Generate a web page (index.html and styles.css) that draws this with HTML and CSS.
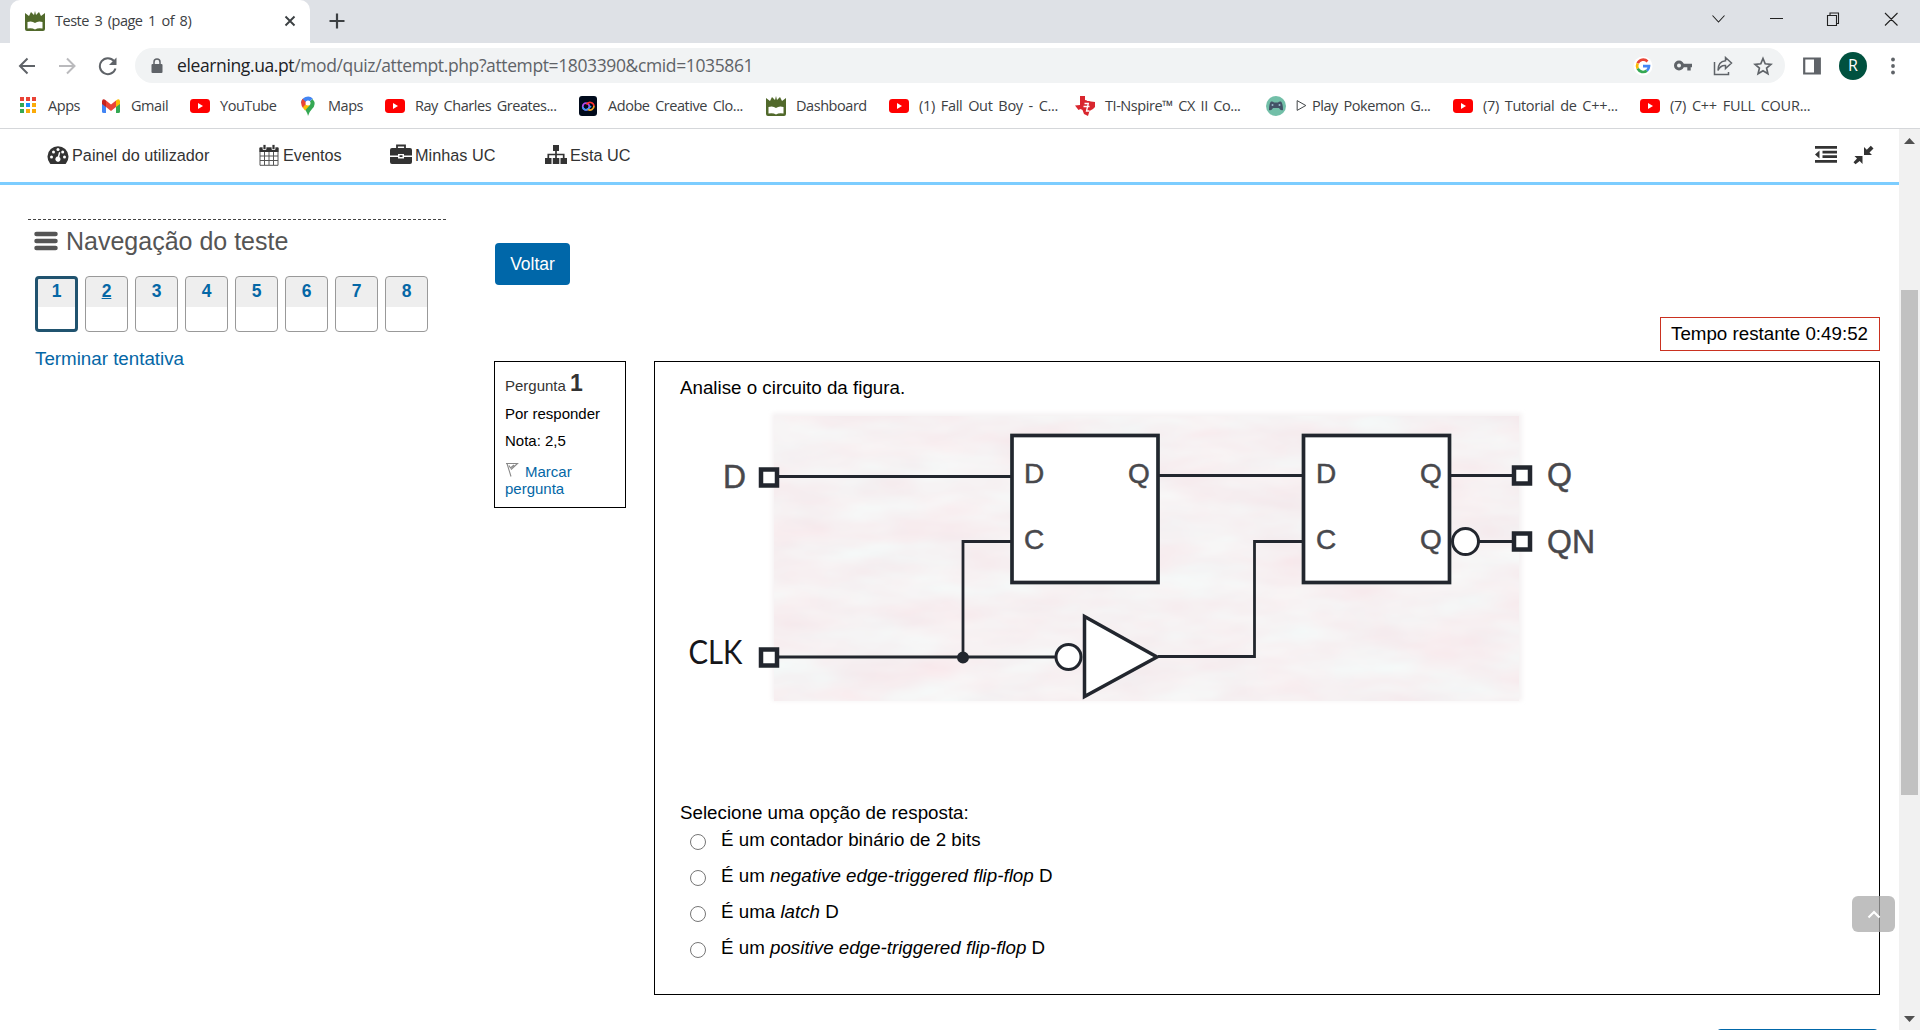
FILE: index.html
```html
<!DOCTYPE html>
<html lang="pt">
<head>
<meta charset="utf-8">
<title>Teste 3 (page 1 of 8)</title>
<link rel="stylesheet" href="styles.css">
</head>
<body>
<svg class="defs" width="0" height="0">
  <defs>
    <symbol id="yt" viewBox="0 0 20 20"><rect y="3" width="20" height="14" rx="3.4" fill="#f00"/><path d="M8 7v6l5-3z" fill="#fff"/></symbol>
    <symbol id="ua" viewBox="0 0 20 20"><path d="M0 2l4 3 2-4 3 3 1-4 1 4 3-3 2 4 4-3v16q0 2-2 2H2q-2 0-2-2z" fill="#51692b"/><path d="M2.500 11q4.500-1.500 7.500 1 3-2.500 7.500-1v6.500q-4.500-1-7.500 1-3-2-7.500-1z" fill="#fff"/></symbol>
  </defs>
</svg>

<header class="tabs">
  <div class="tab">
    <svg class="fav"><use href="#ua"/></svg>
    <span class="tab-title">Teste 3 (page 1 of 8)</span>
    <svg class="tab-x" viewBox="0 0 12 12"><path d="M1.500 1.500l9 9M10.500 1.500l-9 9" stroke="#3c4043" stroke-width="1.900"/></svg>
  </div>
  <svg class="plus" viewBox="0 0 16 16"><path d="M8 .5v15M.5 8h15" stroke="#3c4043" stroke-width="2.200"/></svg>
  <svg class="win" width="188" height="16" viewBox="0 0 188 16" fill="none" stroke="#222" stroke-width="1.100">
    <path d="M1.500 4.500l6 6.500 6-6.500M59 7.500h13"/><path d="M116.500 4.500h9v10h-9zM119 4V2h8.500v10.500H125.500M174 2l12.500 12.500M186.500 2L174 14.500"/>
  </svg>
</header>

<div class="toolbar">
  <svg class="nav-btns" width="99" height="20" viewBox="0 0 99 20" fill="none" stroke="#5f6368" stroke-width="2">
    <path d="M17 10H2M9.500 2.500L2 10l7.500 7.500"/>
    <path d="M41 10h15M49 2.500l7.500 7.500-7.500 7.500" stroke="#bababd"/>
    <path d="M96 5a8 8 0 1 0 1.500 7.500"/><path d="M98.500 1.500v7.500H91z" fill="#5f6368" stroke="none"/>
  </svg>
  <div class="omnibox">
    <svg class="lock" width="12" height="16" viewBox="0 0 12 16"><rect x=".5" y="6" width="11" height="9" rx="1" fill="#5f6368"/><path d="M3 6V4a3 3 0 0 1 6 0v2" fill="none" stroke="#5f6368" stroke-width="1.500"/></svg>
    <span class="url"><b>elearning.ua.pt</b>/mod/quiz/attempt.php?attempt=1803390&amp;cmid=1035861</span>
    <div class="omni-icons">
      <svg width="20" height="20" viewBox="0 0 20 20"><circle cx="10" cy="10" r="9.500" fill="#fff"/><g fill="none" stroke-width="2.700"><path d="M14.500 5.500A6 6 0 0 0 4.700 7.300" stroke="#ea4335"/><path d="M4.700 7.300a6 6 0 0 0 0 5.400" stroke="#fbbc05"/><path d="M4.700 12.700a6 6 0 0 0 9.200 1.900" stroke="#34a853"/><path d="M13.900 14.600A6 6 0 0 0 16 10.200h-6" stroke="#4285f4"/></g></svg>
      <svg width="20" height="20" viewBox="0 0 20 20" fill="none" stroke="#5f6368"><circle cx="6" cy="9.500" r="3.500" stroke-width="3"/><path d="M10 9.500h9M16 10v4.500" stroke-width="3.400"/></svg>
      <svg width="20" height="20" viewBox="0 0 20 20" fill="none" stroke="#5f6368" stroke-width="1.500"><path d="M1.500 6v12.500h14V16"/><path d="M12.500 1.500l6 5.500-6 5.500V9.500Q7.500 9 5 14.500 5 5.500 12.500 4.800z"/></svg>
      <svg width="20" height="20" viewBox="0 0 20 20"><path d="M10 2.500l2.200 5.300 5.700.5-4.300 3.800 1.300 5.600L10 14.700l-4.900 3 1.300-5.600L2.100 8.300l5.700-.5z" fill="none" stroke="#5f6368" stroke-width="1.700"/></svg>
    </div>
  </div>
  <svg class="panel" width="18" height="18" viewBox="0 0 18 18"><path d="M1.200 1.500h15.600v15H1.200z" fill="none" stroke="#5f6368" stroke-width="2.200"/><path d="M11 1h6v16h-6z" fill="#5f6368"/></svg>
  <span class="avatar">R</span>
  <svg class="dots" width="6" height="18" viewBox="0 0 6 18" fill="#5f6368"><circle cx="3" cy="2.500" r="1.900"/><circle cx="3" cy="9" r="1.900"/><circle cx="3" cy="15.500" r="1.900"/></svg>
</div>

<nav class="bookmarks">
  <a class="bm w-apps"><svg viewBox="0 0 20 20"><path d="M2 1h4v4H2zM8 1h4v4H8zM14 1h4v4h-4z" fill="#ea4335"/><path d="M2 7h4v4H2zM2 13h4v4H2z" fill="#34a853"/><path d="M8 7h4v4H8z" fill="#1a8cff"/><path d="M14 7h4v4h-4zM8 13h4v4H8zM14 13h4v4h-4z" fill="#fbab09"/></svg><span>Apps</span></a>
  <a class="bm w-gmail"><svg viewBox="0 0 20 20"><path d="M1 5v10.500q0 1.500 1.500 1.500H5V8z" fill="#4285f4"/><path d="M19 5v10.500q0 1.500-1.500 1.500H15V8z" fill="#34a853"/><path d="M15 4.500q3.500-3 4 .7V8l-4 3z" fill="#fbbc04"/><path d="M5 4.500l5 4 5-4V11l-5 4-5-4z" fill="#ea4335"/><path d="M5 4.500Q1.500 1.500 1 5.200V8l4 3z" fill="#c5221f"/></svg><span>Gmail</span></a>
  <a class="bm w-yt"><svg><use href="#yt"/></svg><span>YouTube</span></a>
  <a class="bm w-maps"><svg viewBox="0 0 20 20"><path d="M10 20Q9 15 5 11.500L14.500 3Q19 8 14 13q-3 3-4 7z" fill="#34a853"/><path d="M3 7a7 7 0 0 1 11.800-4.500L10 7z" fill="#4285f4"/><path d="M4.500 2.800L9 7l-4 5Q1.500 7 4.500 2.800z" fill="#ea4335"/><path d="M12 9l-5 5.500L4.800 11.500 9 7z" fill="#fbbc04"/><circle cx="10" cy="7" r="2.500" fill="#fff"/></svg><span>Maps</span></a>
  <a class="bm w-ray"><svg><use href="#yt"/></svg><span>Ray Charles Greates...</span></a>
  <a class="bm w-adobe"><svg viewBox="0 0 20 20"><rect x="1" y="0" width="18" height="20" rx="3" fill="#010b1c"/><g fill="none" stroke-width="1.700"><circle cx="8" cy="10.500" r="3.300" stroke="#b04bf0"/><path d="M4.700 11a3.300 3.300 0 0 0 5 2.300L13 10" stroke="#3a9bf5"/><path d="M8.500 8.500a4 4 0 0 1 7.500 1.500" stroke="#f33"/><path d="M16 10a4 4 0 0 1-6 3.500" stroke="#f5a623"/></g></svg><span>Adobe Creative Clo...</span></a>
  <a class="bm w-dash"><svg><use href="#ua"/></svg><span>Dashboard</span></a>
  <a class="bm w-fall"><svg><use href="#yt"/></svg><span>(1) Fall Out Boy - C...</span></a>
  <a class="bm w-ti"><svg viewBox="0 0 20 20"><path d="M5 0h5v4l6 1.500 4 .5v5l-2 2-3.500 2-1.500 5-4-2-1.500-4-2-1-2 1L0 9.500l5-.5z" fill="#d9262e"/><circle cx="13" cy="3.800" r="1.200" fill="#fff"/><path d="M9.500 7.500h3.800l-1.800 7.500h3M8.500 10.500h6" fill="none" stroke="#fff" stroke-width="1.300"/></svg><span>TI-Nspire™ CX II Co...</span></a>
  <a class="bm w-poke"><svg viewBox="0 0 20 20"><circle cx="10" cy="10" r="10" fill="#72bfa8"/><path d="M5 5.500q2-.5 3 1h4q1-1.500 3-1 2 2 2 8.500-2.500 1-4-2H7q-1.500 3-4 2 0-6.500 2-8.500z" fill="#435266"/><circle cx="6.500" cy="9" r="1" fill="#9bc"/><circle cx="13.500" cy="9" r="1" fill="#9bc"/></svg><span><svg class="tri" viewBox="0 0 10 12"><path d="M1 1.500L9 6l-8 4.500z" fill="none" stroke="#3c4043" stroke-width=".9"/></svg>Play Pokemon G...</span></a>
  <a class="bm w-tut"><svg><use href="#yt"/></svg><span>(7) Tutorial de C++...</span></a>
  <a class="bm w-full"><svg><use href="#yt"/></svg><span>(7) C++ FULL COUR...</span></a>
</nav>

<div class="viewport">
  <div class="page">
    <nav class="menu">
      <a class="m-painel"><svg viewBox="0 0 22 22"><path d="M3 19.500A10.500 10.500 0 1 1 19 19.500q-.5.500-1 .5H4q-.5 0-1-.5z" fill="#333"/><g fill="#fff"><circle cx="4.500" cy="13" r="1.500"/><circle cx="6.500" cy="8" r="1.500"/><circle cx="11" cy="5.500" r="1.500"/><circle cx="15.700" cy="8" r="1.500"/><circle cx="17.500" cy="13" r="1.500"/><path d="M12 8l1.300.4-1 4.600a2.600 2.600 0 1 1-1.500-.4z"/></g></svg>Painel do utilizador</a>
      <a class="m-eventos"><svg viewBox="0 0 22 22"><path d="M2 4h18v17.300H2zM2 12h18M2 16.500h18M6.500 8v13M11 8v13M15.500 8v13" fill="none" stroke="#555" stroke-width="1"/><path d="M1.500 3.500h19V8h-19z" fill="#333"/><path d="M5 .5h3v5H5zM14 .5h3v5h-3z" fill="#333" stroke="#fff" stroke-width=".8"/></svg>Eventos</a>
      <a class="m-minhas"><svg viewBox="0 0 22 22"><path d="M7 4V1.500h8V4" fill="none" stroke="#333" stroke-width="1.800"/><path d="M2 4h18q2 0 2 2v5.500h-8V10H8v1.500H0V6q0-2 2-2zM0 13h8v1.500h6V13h8v5q0 2-2 2H2q-2 0-2-2zM9.500 11.300h3V13h-3z" fill="#333"/></svg>Minhas UC</a>
      <a class="m-esta"><svg viewBox="0 0 22 22"><path d="M8 1h6v6H8zM0 14h6.500v6H0zM7.800 14h6.500v6H7.800zM15.500 14H22v6h-6.500z" fill="#333"/><path d="M11 7v7M3.300 14v-3.500h15.400V14" fill="none" stroke="#333" stroke-width="1.700"/></svg>Esta UC</a>
      <svg class="menu-tools" width="60" height="20" viewBox="0 0 60 20" fill="#333"><path d="M1 1h22v2.800H1zM8.500 5.800h14.500v2.600H8.500zM8.500 10.300h14.500v2.700H8.500zM1 15h22v2.800H1zM1 9.400l4.500-4v8z"/><path d="M50 2v8h8l-2.500-2.500 4-4-2.700-2.700-4 4zM48.500 11h-8l2.500 2.500-3.500 3.800 2 2L45.700 16l2.800 3z"/></svg>
    </nav>
    <div class="columns">
      <aside class="side">
        <h2><svg width="24" height="20" viewBox="0 0 24 20"><path d="M2.500 3h19M2.500 10h19M2.500 17h19" stroke="#555" stroke-width="4.500" stroke-linecap="round"/></svg>Navegação do teste</h2>
        <div class="qnav"><a class="on">1</a><a class="under">2</a><a>3</a><a>4</a><a>5</a><a>6</a><a>7</a><a>8</a></div>
        <a class="finish">Terminar tentativa</a>
      </aside>
      <main class="main">
        <a class="back">Voltar</a>
        <div class="timer">Tempo restante 0:49:52</div>
        <div class="question">
          <section class="info">
            <p class="num">Pergunta <b>1</b></p>
            <p class="state">Por responder</p>
            <p class="grade">Nota: 2,5</p>
            <p class="flag"><svg width="14" height="16" viewBox="0 0 14 16"><path d="M1 1.500h11.500L6 7.500M2 1.500l4 13M4 3.500l1.500 2.500L9 3" fill="none" stroke="#888" stroke-width="1.100"/></svg>Marcar<br>pergunta</p>
          </section>
          <section class="content">
            <p class="stem">Analise o circuito da figura.</p>
            <svg class="circuit" width="940" height="300" viewBox="680 405 940 300">
              <defs>
                <filter id="soft" x="-5%" y="-5%" width="110%" height="110%"><feGaussianBlur stdDeviation="2"/></filter>
                <filter id="paper" x="0" y="0" width="100%" height="100%" color-interpolation-filters="sRGB">
                  <feTurbulence type="fractalNoise" baseFrequency=".012 .035" numOctaves="3" seed="4"/>
                  <feColorMatrix values=".03 0 0 0 .95  0 .09 0 0 .90  0 .07 0 0 .915  0 0 0 0 1"/>
                </filter>
                <filter id="ink"><feGaussianBlur stdDeviation=".45"/></filter>
              </defs>
              <path d="M772 413h750v288H772z" fill="#f5f2f3" filter="url(#soft)"/>
              <rect x="774" y="416" width="745" height="285" filter="url(#paper)"/>
              <g fill="#fff" stroke="#23282f" stroke-width="3" filter="url(#ink)">
                <path d="M779 476.500h233M1158 475.500h145M1451 475.500h61M1479 541.500h33M779 657h278M1158 656.500h96.500v-115h48M963 657V541.500h49" fill="none" stroke-width="2.800"/>
                <rect x="1012" y="435.500" width="146" height="147" stroke-width="3.700"/>
                <rect x="1303.500" y="435.500" width="146" height="147" stroke-width="3.700"/>
                <path d="M1084.500 616.500v80l72.500-39.500z" stroke-width="3.500"/>
                <circle cx="1068.500" cy="657" r="12.500"/><circle cx="1465.500" cy="541.500" r="13"/>
                <circle cx="963" cy="657.500" r="4.500" fill="#23282f"/>
                <g stroke-width="4.500"><path d="M761 469.500h16v16h-16zM761 649.500h16v16h-16zM1514 467.500h16v16h-16zM1514 533.500h16v16h-16z"/></g>
              </g>
              <g class="labels">
                <text x="723" y="487.500" textLength="23" lengthAdjust="spacingAndGlyphs">D</text>
                <text x="1547" y="486" textLength="25" lengthAdjust="spacingAndGlyphs">Q</text>
                <text x="1547" y="552.500" textLength="48" lengthAdjust="spacingAndGlyphs">QN</text>
                <text class="clk" x="688.500" y="663.500" textLength="54" lengthAdjust="spacingAndGlyphs">CLK</text>
              </g>
              <g class="labels inner">
                <text x="1024" y="483">D</text><text x="1128" y="483">Q</text><text x="1024" y="548.500">C</text>
                <text x="1316" y="482.500">D</text><text x="1420" y="483">Q</text><text x="1316" y="548.500">C</text><text x="1420" y="548.500">Q</text>
              </g>
            </svg>
            <p class="prompt">Selecione uma opção de resposta:</p>
            <ul class="answers">
              <li><i class="radio"></i><span>É um contador binário de 2 bits</span></li>
              <li><i class="radio"></i><span>É um <em>negative edge-triggered flip-flop</em> D</span></li>
              <li><i class="radio"></i><span>É uma <em>latch</em> D</span></li>
              <li><i class="radio"></i><span>É um <em>positive edge-triggered flip-flop</em> D</span></li>
            </ul>
          </section>
        </div>
        <a class="next"></a>
      </main>
    </div>
    <a class="to-top"><svg width="14" height="9" viewBox="0 0 14 9"><path d="M1.500 7.500L7 2l5.500 5.500" fill="none" stroke="#fff" stroke-width="2.200"/></svg></a>
  </div>
  <div class="scrollbar">
    <svg width="13" height="6" viewBox="0 0 13 6"><path d="M6.500 0L12 6H1z" fill="#505050"/></svg>
    <div class="thumb"></div>
    <svg class="down" width="13" height="6" viewBox="0 0 13 6"><path d="M6.500 6L12 0H1z" fill="#505050"/></svg>
  </div>
</div>
</body>
</html>
```
FILE: styles.css
```css
* { box-sizing: border-box; }
html, body { height: 1030px; overflow: hidden; }
body { margin: 0; display: flex; flex-direction: column; background: #fff; font-family: "Liberation Sans", Arial, sans-serif; color: #000; }
p, h2, ul { margin: 0; padding: 0; }
svg { flex: none; display: block; }
.defs { position: absolute; }

.tabs { height: 43px; flex: none; background: #dee1e6; display: flex; align-items: flex-start; padding-left: 10px; font-family: "Open Sans", "Noto Sans", sans-serif; }
.tab { width: 300px; height: 43px; background: #fff; border-radius: 10px 10px 0 0; display: flex; align-items: center; padding: 0 14px 1px 15px; }
.fav { width: 20px; height: 20px; }
.tab-title { margin: -2px 0 0 10px; flex: 1; font-size: 14.500px; letter-spacing: -.5px; word-spacing: 2.300px; color: #3c4043; white-space: nowrap; }
.tab-x { width: 12px; height: 12px; }
.plus { width: 16px; height: 16px; margin: 13px 0 0 19px; }
.win { margin: 11px 21px 0 auto; }

.toolbar { height: 45px; flex: none; display: flex; align-items: center; padding: 0 24px 0 18px; font-family: "Open Sans", "Noto Sans", sans-serif; }
.nav-btns { margin-right: 18px; }
.omnibox { width: 1650px; height: 35px; border-radius: 18px; background: #f1f3f4; display: flex; align-items: center; padding: 0 12px 0 16px; }
.url { margin: -2px 0 0 14px; font-size: 17.500px; letter-spacing: -.38px; color: #5f6368; white-space: nowrap; }
.url b { font-weight: 400; color: #202124; }
.omni-icons { margin-left: auto; display: flex; gap: 20px; }
.panel { margin-left: 18px; }
.avatar { width: 28px; height: 28px; margin-left: 18px; border-radius: 50%; background: #00513f; color: #fff; font-size: 16px; line-height: 27px; text-align: center; }
.dots { margin-left: auto; }

.bookmarks { height: 41px; flex: none; display: flex; align-items: center; padding: 0 0 5px 18px; border-bottom: 1px solid #d5d7da; font-family: "Open Sans", "Noto Sans", sans-serif; }
.bm { display: flex; align-items: center; flex: none; gap: 10px; font-size: 14.500px; letter-spacing: -.45px; word-spacing: 2.300px; color: #3c4043; white-space: nowrap; }
.bm > svg { width: 20px; height: 20px; }
.bm span { display: flex; align-items: center; }
.tri { width: 11px; height: 13px; margin-right: 5px; }
.w-apps { width: 83px; } .w-gmail { width: 89px; } .w-yt { width: 108px; } .w-maps { width: 87px; }
.w-ray { width: 193px; } .w-adobe { width: 188px; } .w-dash { width: 123px; } .w-fall { width: 186px; }
.w-ti { width: 191px; } .w-poke { width: 187px; } .w-tut { width: 187px; } .w-full { width: 175px; letter-spacing: -.25px; }
.w-fall, .w-tut { letter-spacing: -.3px; }

.viewport { flex: 1; min-height: 0; display: flex; }
.page { width: 1899px; position: relative; overflow: hidden; }
.menu { height: 56px; border-bottom: 3px solid #7ccdff; display: flex; align-items: center; padding: 0 25px 1px 47px; font-size: 16.250px; color: #333; }
.menu a { display: flex; align-items: center; gap: 3px; }
.menu a svg { width: 22px; height: 22px; }
.m-painel { width: 211px; } .m-eventos { width: 132px; } .m-minhas { width: 155px; }
.menu-tools { margin-left: auto; }

.columns { display: flex; align-items: flex-start; }
.side { width: 418px; margin: 34px 48px 0 28px; border-top: 1px dashed #444; padding-left: 7px; }
.side h2 { display: flex; align-items: center; gap: 8px; height: 44px; margin: -1px 0 0 -1px; font-size: 25px; font-weight: 400; color: #555; }
.qnav { display: flex; gap: 7px; margin-top: 13px; }
.qnav a { width: 43px; height: 56px; border: 1px solid #999; border-radius: 4px; background: linear-gradient(#eee 30px, #fff 30px); text-align: center; font-size: 17.500px; line-height: 29px; font-weight: 700; color: #0467a6; }
.qnav .on { border: 3px solid #20536f; line-height: 25px; background: linear-gradient(#eee 28px, #fff 28px); }
.qnav .under { text-decoration: underline; }
.finish { display: block; margin-top: 16px; font-size: 18.750px; line-height: 22px; color: #0467a6; }

.main { width: 1386px; display: flex; flex-direction: column; }
.back { width: 75px; height: 42px; margin: 58px 0 32px 1px; border-radius: 4px; background: #0067a9; color: #fff; font-size: 17.500px; line-height: 42px; text-align: center; }
.timer { align-self: flex-end; width: 220px; height: 34px; border: 1px solid #ca3120; padding: 0 10px; font-size: 18.750px; line-height: 32px; }
.question { display: flex; align-items: flex-start; justify-content: space-between; margin-top: 10px; }
.info { width: 132px; height: 147px; border: 1px solid #000; padding: 5px 0 0 10px; font-size: 15px; line-height: 17px; }
.num { height: 32px; line-height: 32px; color: #333; }
.num b { font-size: 23px; }
.state { margin-top: 6px; }
.grade { margin-top: 10px; }
.flag { margin-top: 13px; color: #0467a6; }
.flag svg { display: inline-block; vertical-align: -1px; margin-right: 6px; }
.content { width: 1226px; height: 634px; border: 1px solid #000; padding: 15px 25px; font-size: 18.750px; line-height: 22px; }
.circuit { margin-top: 6px; }
.labels { font-family: "Liberation Sans", Arial, sans-serif; font-size: 33px; fill: #48484c; stroke: #48484c; stroke-width: .5px; }
.inner { font-size: 28px; }
.clk { font-family: Lato, "Open Sans", sans-serif; fill: #16161a; stroke: none; font-size: 32px; }
.prompt { margin-top: 97px; }
.answers { list-style: none; margin-top: 5px; }
.answers li { height: 36px; display: flex; }
.radio { width: 16px; height: 16px; margin: 5px 15px 0 10px; border: 1px solid #767676; border-radius: 50%; }
.next { width: 161px; height: 42px; margin: 34px 2px 0 auto; border-radius: 4px; background: #0067a9; }
.to-top { position: absolute; left: 1852px; top: 767px; width: 43px; height: 36px; border-radius: 6px; background: rgba(170,170,170,.75); display: flex; align-items: center; justify-content: center; }

.scrollbar { width: 21px; background: #f1f1f1; display: flex; flex-direction: column; align-items: center; padding: 9px 0 8px; }
.thumb { width: 17px; height: 505px; margin-top: 146px; background: #c1c1c1; }
.down { margin-top: auto; }
```
